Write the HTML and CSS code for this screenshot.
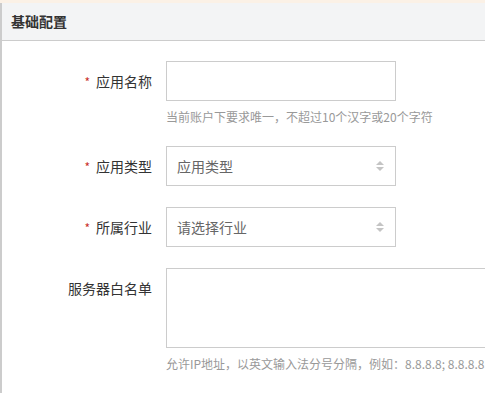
FILE: index.html
```html
<!DOCTYPE html>
<html lang="zh-CN">
<head>
    <meta charset="UTF-8">
    <meta name="viewport" content="width=device-width, initial-scale=1.0">
    <title>基础配置</title>
    <link rel="stylesheet" href="styles.css">
</head>
<body>

    <div class="panel">
        <div class="panel-head">基础配置</div>

        <div class="panel-body">
            <div class="form-row">
                <label class="form-label"><span class="req">*</span>应用名称</label>
                <div class="form-field">
                    <input class="input" type="text">
                    <div class="hint">当前账户下要求唯一，不超过10个汉字或20个字符</div>
                </div>
            </div>

            <div class="form-row">
                <label class="form-label"><span class="req">*</span>应用类型</label>
                <div class="form-field">
                    <div class="select">
                        <span>应用类型</span>
                        <span class="arrows"></span>
                    </div>
                </div>
            </div>

            <div class="form-row">
                <label class="form-label"><span class="req">*</span>所属行业</label>
                <div class="form-field">
                    <div class="select">
                        <span>请选择行业</span>
                        <span class="arrows"></span>
                    </div>
                </div>
            </div>

            <div class="form-row">
                <label class="form-label">服务器白名单</label>
                <div class="form-field wide">
                    <textarea class="textarea"></textarea>
                    <div class="hint">允许IP地址，以英文输入法分号分隔，例如：8.8.8.8; 8.8.8.8</div>
                </div>
            </div>
        </div>
    </div>

</body>
</html>
```

FILE: styles.css
```css
:root {
    --border: #cccccc;
    --text: #333333;
    --muted: #999999;
    --head-bg: #f3f4f5;
}

body {
    margin: 0;
    font-family: 'Noto Sans CJK SC', 'Noto Sans', sans-serif;
    color: var(--text);
    background: #ffffff;
    border-top: 3px solid #fbf1e6;
    overflow: hidden;
}

.panel {
    border-left: 2px solid var(--border);
    min-height: 390px;
    overflow: hidden;
}

.panel-head {
    height: 37px;
    line-height: 37px;
    padding-left: 9px;
    background: var(--head-bg);
    border-bottom: 1px solid var(--border);
    font-size: 14px;
    font-weight: bold;
    color: #333;
}

.panel-body {
    padding-top: 20px;
}

.form-row {
    display: flex;
    gap: 14px;
    margin-bottom: 20px;
}

.form-label {
    width: 150px;
    flex-shrink: 0;
    text-align: right;
    font-size: 14px;
    line-height: 40px;
    color: var(--text);
}

.req {
    color: #c9302c;
    font-size: 12px;
    margin-right: 6px;
}

.form-field {
    width: 230px;
}

.form-field.wide {
    flex: 1;
    min-width: 0;
}

.input,
.select,
.textarea {
    box-sizing: border-box;
    width: 100%;
    height: 40px;
    border: 1px solid var(--border);
    background: #fff;
    margin: 0;
    display: block;
}

.select {
    display: flex;
    align-items: center;
    justify-content: space-between;
    padding: 0 11px 0 10px;
    font-size: 14px;
    color: #666;
}

.arrows {
    display: flex;
    flex-direction: column;
    gap: 2px;
}

.arrows::before,
.arrows::after {
    content: '';
    display: block;
    border-left: 4px solid transparent;
    border-right: 4px solid transparent;
}

.arrows::before {
    border-bottom: 4px solid #c4c4c4;
}

.arrows::after {
    border-top: 4px solid #c4c4c4;
}

.textarea {
    width: calc(100% + 20px);
    height: 80px;
    resize: none;
}

.hint {
    margin-top: 7px;
    font-size: 12px;
    line-height: 18px;
    color: var(--muted);
    white-space: nowrap;
}
```
